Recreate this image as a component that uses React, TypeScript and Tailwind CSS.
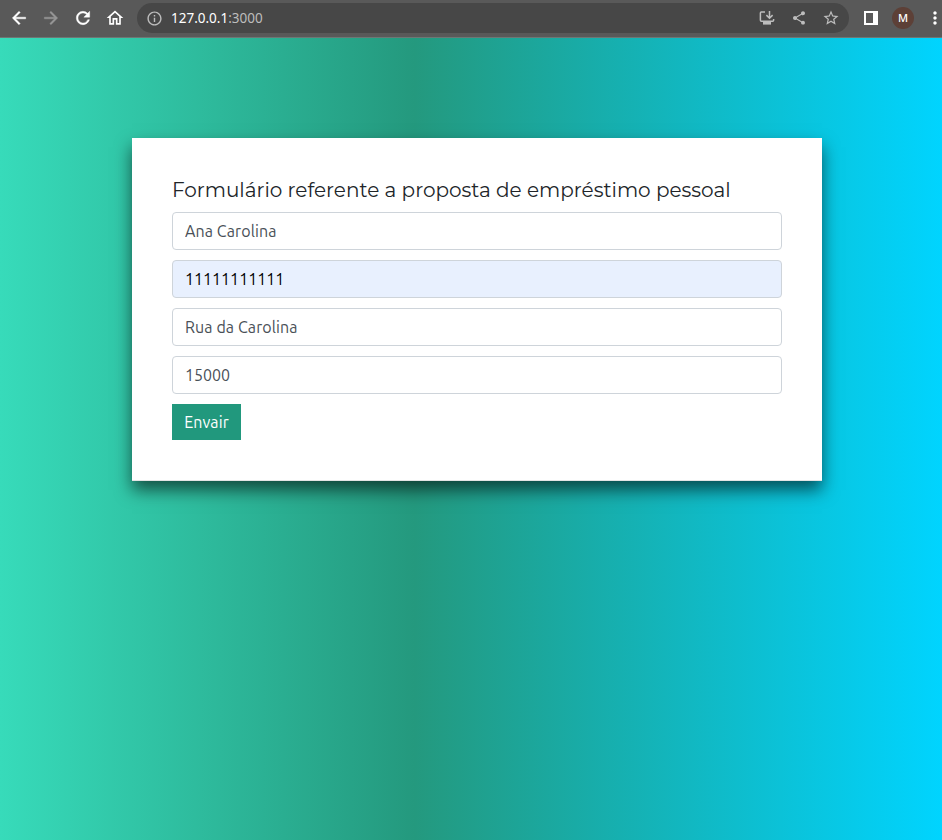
import { MdOutlineInfo, MdArrowBack, MdArrowForward, MdRefresh, MdOutlineHome, MdShare, MdStarBorder, MdMoreVert } from "react-icons/md";

function InstallIcon() {
  return (
    <svg width="16" height="16" viewBox="0 0 16 16" fill="none" stroke="#bdbdbd" strokeWidth="1.5">
      <path d="M6 2H2.3Q1.4 2 1.4 3v7.3q0 .9.9.9h11.4q.9 0 .9-.9V9" />
      <path d="M10.5 1v7M7.4 5.1l3.1 3.1 3.1-3.1" />
      <path d="M4 13.3h8" strokeWidth="2.6" />
    </svg>
  );
}

function Toolbar() {
  return (
    <header className="flex h-[38px] shrink-0 items-start border-b border-[#6e7775] bg-[#595959] font-['Noto_Sans',sans-serif]">
      <nav className="flex h-9 items-center gap-3 pl-[9px] text-white">
        <MdArrowBack size={20} className="[&_path:last-child]:stroke-current [&_path:last-child]:stroke-[0.5]" />
        <MdArrowForward size={20} className="text-[#979797] [&_path:last-child]:stroke-current [&_path:last-child]:stroke-[0.5]" />
        <MdRefresh size={20} className="[&_path:last-child]:stroke-current [&_path:last-child]:stroke-[0.5]" />
        <MdOutlineHome size={20} />
      </nav>
      <div className="mt-[3px] ml-3 flex h-[30px] w-[712px] shrink-0 items-center rounded-full bg-[#474747] pl-[9px] pr-[9px] text-[#bdbdbd]">
        <MdOutlineInfo size={17} className="mr-px" />
        <span className="ml-[7px] text-[13.5px] leading-[18px]">
          <span className="text-white">127.0.0.1</span>:3000
        </span>
        <div className="ml-auto flex items-center">
          <InstallIcon />
          <MdShare size={16} className="ml-4" />
          <MdStarBorder size={18} className="ml-[15px]" />
        </div>
      </div>
      <div className="ml-[15px] flex h-9 shrink-0 items-center">
        <svg width="14" height="14" viewBox="0 0 14 14">
          <path d="M0 0h14v14H0zM2 2v10h7V2z" fill="white" fillRule="evenodd" />
        </svg>
        <span className="ml-[14px] flex size-[22px] items-center justify-center rounded-full bg-[#5d4037] text-[11px] font-medium text-white">M</span>
        <MdMoreVert size={20} className="ml-[11px] shrink-0 text-white" />
      </div>
    </header>
  );
}

const inputClass =
  "block h-[38px] w-full rounded-[4px] border border-[#ced4da] px-3 text-[16px] leading-6 outline-none";

export default function App() {
  return (
    <div className="flex h-[840px] w-[942px] flex-col overflow-hidden">
      <Toolbar />
      <main className="flex-1 bg-[linear-gradient(90deg,#37dbba_0%,#24997e_44%,#00d4ff_100%)] pt-[100px] font-['Ubuntu','Noto_Sans',sans-serif]">
        <form className="ml-[132px] h-[343px] w-[690px] border-b border-[#e4e4e4] bg-white p-10 shadow-[0_9px_16px_rgba(0,0,0,0.58)]">
          <h5 className="mb-[10px] h-6 text-[20px] leading-6 font-normal whitespace-nowrap text-[#212529] font-['Montserrat','Lato',sans-serif]">
            Formulário referente a proposta de empréstimo pessoal
          </h5>
          <div className="flex flex-col gap-[10px]">
            <input className={`${inputClass} bg-white tracking-[0.1px] text-[#495057]`} defaultValue="Ana Carolina" />
            <input className={`${inputClass} bg-[#e8f0fe] text-black`} defaultValue="11111111111" />
            <input className={`${inputClass} bg-white tracking-[0.1px] text-[#495057]`} defaultValue="Rua da Carolina" />
            <input className={`${inputClass} bg-white text-[#495057]`} defaultValue="15000" />
            <button type="button" className="h-9 w-[69px] bg-[#21987d] text-[16px] tracking-[0.1px] text-white">Envair</button>
          </div>
        </form>
      </main>
    </div>
  );
}
